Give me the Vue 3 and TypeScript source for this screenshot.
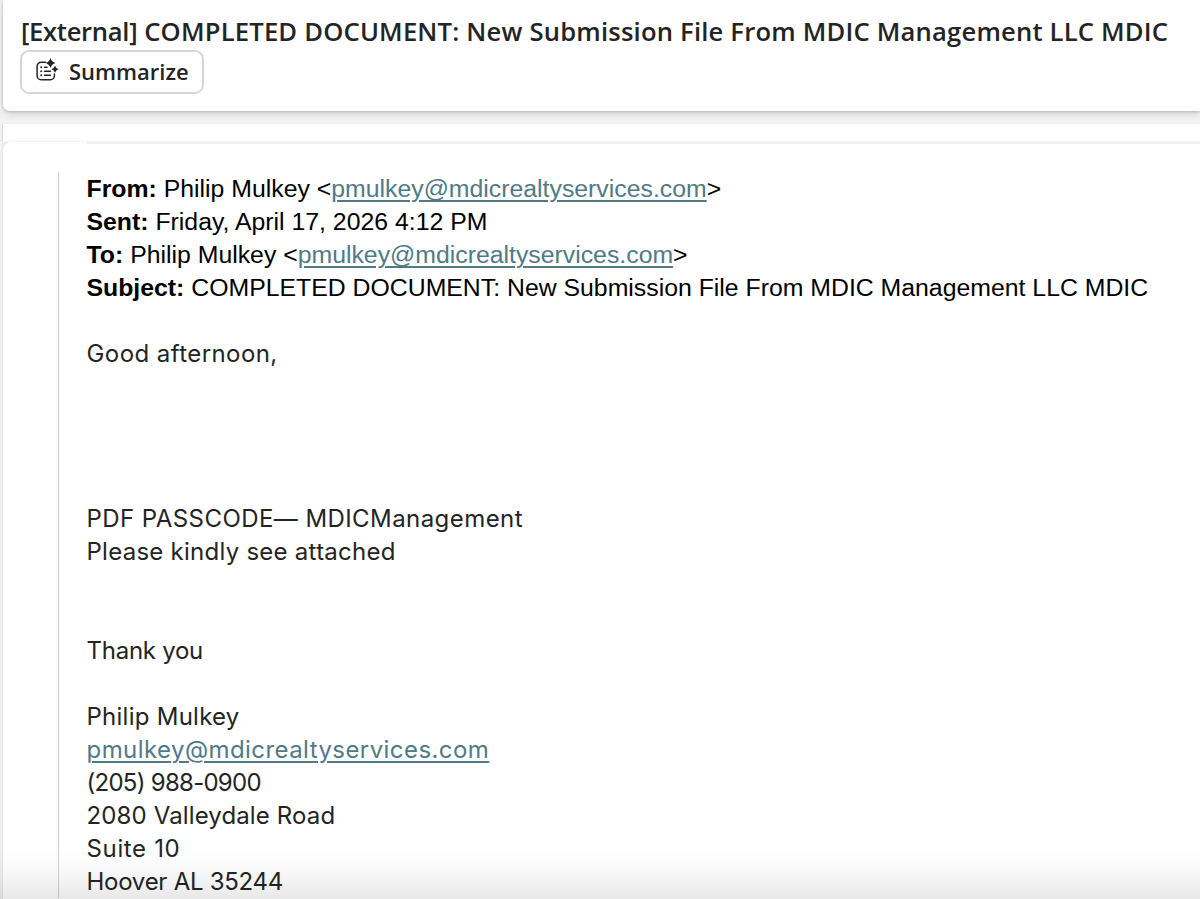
<script setup lang="ts">
interface Line {
  text: string
  fit?: string
  link?: boolean
}

const email = 'pmulkey@mdicrealtyservices.com'
const subject = 'COMPLETED DOCUMENT: New Submission File From MDIC Management LLC MDIC'

const body: Line[] = [
  { text: '' },
  { text: 'Good afternoon,', fit: 'wide' },
  { text: '' },
  { text: '' },
  { text: '' },
  { text: '' },
  { text: 'PDF PASSCODE— MDICManagement', fit: 'wide' },
  { text: 'Please kindly see attached', fit: 'open' },
  { text: '' },
  { text: '' },
  { text: 'Thank you', fit: 'snug' },
  { text: '' },
  { text: 'Philip Mulkey', fit: 'open' },
  { text: email, link: true, fit: 'wide' },
  { text: '(205) 988-0900', fit: 'tight' },
  { text: '2080 Valleydale Road', fit: 'normal' },
  { text: 'Suite 10', fit: 'widest' },
  { text: 'Hoover AL 35244', fit: 'snug' },
]
</script>

<template>
  <main class="page">
    <header class="top">
      <h1><span class="tag">[External]</span> {{ subject }}</h1>
      <button class="summarize" type="button">
        <svg viewBox="0 0 24 24" width="24" height="24" fill="none" stroke="#242424" stroke-width="1.5" stroke-linecap="round">
          <path d="M10.500 4.300H6.100a4 4 0 0 0-4 4v9.400a4 4 0 0 0 4 4h9.300a4 4 0 0 0 4-4V16" />
          <path d="M9.500 9.200h2.500M9.500 13.200h6M9.500 17.200h6" />
          <g fill="#242424" stroke="none">
            <circle cx="6.200" cy="9.200" r="1" />
            <circle cx="6.200" cy="13.200" r="1" />
            <circle cx="6.200" cy="17.200" r="1" />
            <path d="M15.500 0Q16.700 3.800 20.500 5Q16.700 6.200 15.500 10Q14.300 6.200 10.500 5Q14.300 3.800 15.500 0Z" />
            <path d="M20 7.700Q20.900 10.300 23.500 11.200Q20.900 12.100 20 14.700Q19.100 12.100 16.500 11.200Q19.100 10.300 20 7.700Z" />
          </g>
        </svg>
        <span>Summarize</span>
      </button>
    </header>
    <div class="strip"></div>
    <section class="mail">
      <div class="rule"></div>
      <article class="quote">
        <p class="head"><b>From:</b> Philip Mulkey &lt;<a>{{ email }}</a>&gt;</p>
        <p class="head"><b>Sent:</b> Friday, April 17, 2026 4:12 PM</p>
        <p class="head"><b>To:</b> Philip Mulkey &lt;<a>{{ email }}</a>&gt;</p>
        <p class="head"><b>Subject:</b> {{ subject }}</p>
        <p v-for="(line, i) in body" :key="i" :class="line.fit">
          <a v-if="line.link">{{ line.text }}</a>
          <template v-else>{{ line.text }}</template>
        </p>
      </article>
    </section>
    <div class="fade"></div>
  </main>
</template>

<style scoped>
.page {
  position: relative;
  display: flex;
  flex-direction: column;
  box-sizing: border-box;
  height: 899px;
  padding-left: 3px;
  overflow: hidden;
  background: #f2f2f2;
  color: #242424;
}
.top {
  flex: none;
  box-sizing: border-box;
  height: 111px;
  padding: 15px 0 0 17px;
  background: #fff;
  border-bottom-left-radius: 7px;
  box-shadow: 0 1px 3px rgba(0, 0, 0, 0.18), 0 3px 8px rgba(0, 0, 0, 0.12);
}
h1 {
  margin: 0 0 0 1px;
  font: 600 25.6px/34px "Open Sans", "Noto Sans", sans-serif;
  letter-spacing: 0.2px;
  white-space: nowrap;
}
.tag {
  letter-spacing: -0.31px;
}
.summarize {
  display: flex;
  align-items: center;
  box-sizing: border-box;
  width: 184px;
  height: 44px;
  margin-top: 1px;
  padding: 0 0 0 13px;
  border: 2px solid #d6d6d6;
  border-radius: 9px;
  background: #fff;
  color: #242424;
  font: 600 22px/34px "Open Sans", "Noto Sans", sans-serif;
}
.summarize svg {
  flex: none;
  margin-top: -4px;
}
.summarize span {
  margin: -2px 0 0 10px;
}
.strip {
  flex: none;
  height: 18px;
  margin-top: 13px;
  background: #fff;
  box-shadow: -1px 0 1px rgba(0, 0, 0, 0.1);
}
.mail {
  flex: 1;
  min-height: 0;
  background: #fff;
  border-top-left-radius: 8px;
  box-shadow: 0 0 3px rgba(0, 0, 0, 0.13);
}
.rule {
  height: 2px;
  margin-left: 84px;
  background: #f0f0f0;
}
.quote {
  margin: 28px 0 0 55px;
  padding-left: 27.5px;
  border-left: 1px solid #cfcfcf;
}
p {
  height: 33px;
  margin: 0;
  font: 24px/33px Inter, sans-serif;
  white-space: nowrap;
}
.head {
  color: #000;
  font: 24.82px/33px "Liberation Sans", Arial, sans-serif;
}
a {
  color: #517a86;
  text-decoration: underline;
  text-decoration-thickness: 1.5px;
  text-underline-offset: 3px;
}
.widest { letter-spacing: 0.65px; }
.wide { letter-spacing: 0.43px; }
.open { letter-spacing: 0.26px; }
.normal { letter-spacing: 0.13px; }
.snug { letter-spacing: -0.26px; }
.tight { letter-spacing: -0.73px; }
.fade {
  position: absolute;
  inset: auto 0 0;
  height: 52px;
  background: linear-gradient(rgba(0, 0, 0, 0), rgba(0, 0, 0, 0.02) 40%, rgba(0, 0, 0, 0.09));
}
</style>
